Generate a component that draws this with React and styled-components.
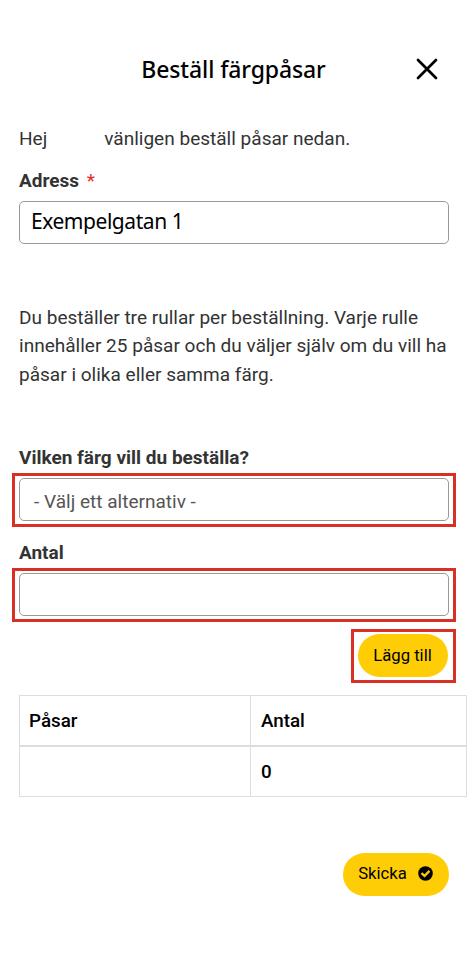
import React, { useState } from 'react';
import styled, { createGlobalStyle } from 'styled-components';

const App = () => {
    const [address, setAddress] = useState('Exempelgatan 1');
    const [amount, setAmount] = useState('');

    return (
        <>
            <GlobalStyle />
            <Page>
                <Header>
                    <Title>Beställ färgpåsar</Title>
                    <CloseBtn aria-label='Stäng'>
                        <svg width='22' height='22' viewBox='0 0 22 22' fill='none' stroke='#000' strokeWidth='2.7' strokeLinecap='round'>
                            <path d='M2 2L20 20M20 2L2 20' />
                        </svg>
                    </CloseBtn>
                </Header>
                <Greeting>
                    <span>Hej</span>
                    <span>vänligen beställ påsar nedan.</span>
                </Greeting>
                <Label $top={14}>
                    Adress <Required>*</Required>
                </Label>
                <AddressInput value={address} onChange={(e) => setAddress(e.target.value)} />
                <Info>
                    Du beställer tre rullar per beställning. Varje rulle<br />
                    innehåller 25 påsar och du väljer själv om du vill ha<br />
                    påsar i olika eller samma färg.
                </Info>
                <Label $top={55}>Vilken färg vill du beställa?</Label>
                <Frame $top={1}>
                    <ColorSelect>- Välj ett alternativ -</ColorSelect>
                </Frame>
                <Label $top={12}>Antal</Label>
                <Frame $top={1}>
                    <Input value={amount} onChange={(e) => setAmount(e.target.value)} />
                </Frame>
                <Frame $top={7} $fit>
                    <YellowBtn $width={90}>Lägg till</YellowBtn>
                </Frame>
                <Table>
                    <thead>
                        <tr>
                            <th>Påsar</th>
                            <th>Antal</th>
                        </tr>
                    </thead>
                    <tbody>
                        <tr>
                            <td></td>
                            <td>0</td>
                        </tr>
                    </tbody>
                </Table>
                <Footer>
                    <YellowBtn $width={106}>
                        Skicka
                        <svg width='15' height='15' viewBox='0 0 15 15'>
                            <circle cx='7.5' cy='7.5' r='7.3' fill='#000' />
                            <path d='M3.5 7.1L6.5 9.8L11.5 4.9' fill='none' stroke='#ffcd05' strokeWidth='2.3' />
                        </svg>
                    </YellowBtn>
                </Footer>
            </Page>
        </>
    );
};

export default App;

const GlobalStyle = createGlobalStyle`
    * {
        box-sizing:border-box;
    }
    body {
        margin:0;
        background:#fff;
        font-family:Roboto, sans-serif;
    }
`;

const Page = styled.div`
    display:flex;
    flex-direction:column;
    width:468px;
    height:966px;
    padding:48px 19px 0;
    overflow:hidden;
    color:#333;
    font-size:19.05px;
    line-height:28px;
`;

const Header = styled.header`
    display:grid;
    grid-template-columns:1fr auto 1fr;
    align-items:center;
    height:42px;
    margin-right:1px;
`;

const Title = styled.h1`
    grid-column:2;
    margin:0;
    color:#000;
    font:500 23px/42px 'Noto Sans', sans-serif;
    letter-spacing:-0.12px;
    white-space:nowrap;
`;

const CloseBtn = styled.button`
    display:flex;
    justify-self:end;
    margin-right:10px;
    padding:0;
    border:none;
    background:transparent;
    cursor:pointer;
`;

const Greeting = styled.p`
    display:flex;
    gap:57px;
    margin:35px 0 0;
    white-space:nowrap;
`;

const Label = styled.label`
    height:28px;
    margin-top:${({ $top }) => $top}px;
    font-size:19px;
    font-weight:700;
    white-space:nowrap;
`;

const Required = styled.span`
    margin-left:3px;
    color:#e02b27;
    font-weight:400;
`;

const Input = styled.input`
    display:block;
    width:430px;
    height:43px;
    padding:0 12px;
    border:1.5px solid #999;
    border-radius:5px;
    background:#fff;
    color:#000;
    font:400 19px Roboto, sans-serif;
    outline:none;
`;

const AddressInput = styled(Input)`
    margin-top:6px;
    padding:0 11px 3px;
    font:400 21px 'Noto Sans', sans-serif;
    letter-spacing:-0.45px;
`;

const Info = styled.p`
    margin:59.5px 0 0;
    line-height:28.5px;
    white-space:nowrap;
`;

const Frame = styled.div`
    align-self:${({ $fit }) => ($fit ? 'flex-end' : 'flex-start')};
    margin:${({ $top }) => $top}px -7px 0;
    padding:2px ${({ $fit }) => ($fit ? 5 : 4)}px 3px 4px;
    border:3px solid #d93025;
`;

const ColorSelect = styled.div`
    display:flex;
    align-items:center;
    width:430px;
    height:43px;
    padding:5px 14px 0;
    border:1.5px solid #999;
    border-radius:5px;
    color:#555;
    cursor:pointer;
`;

const YellowBtn = styled.button`
    display:flex;
    align-items:center;
    justify-content:center;
    gap:11px;
    width:${({ $width }) => $width}px;
    height:43px;
    padding:0 1px 1px 0;
    border:none;
    border-radius:22px;
    background:#ffcd05;
    color:#000;
    font:400 16.7px Roboto, sans-serif;
    cursor:pointer;
`;

const Table = styled.table`
    flex:none;
    width:448px;
    margin-top:11.5px;
    border-collapse:collapse;
    table-layout:fixed;
    color:#000;
    font-size:18.8px;

    th, td {
        height:50.5px;
        padding:1px 9px 0;
        border:1px solid #ddd;
        font-weight:500;
        text-align:left;
    }
    th:first-child {
        width:231px;
    }
    th:last-child, td:last-child {
        padding-left:10px;
    }
    th {
        border-bottom-width:2px;
    }
`;

const Footer = styled.footer`
    display:flex;
    justify-content:flex-end;
    margin-top:56px;
`;
